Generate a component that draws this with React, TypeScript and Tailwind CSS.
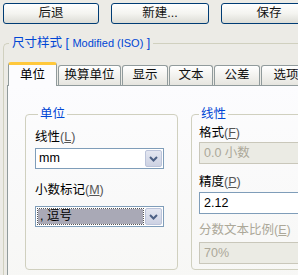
import React from "react";

const FONT = { fontFamily: '"Liberation Sans", "Noto Sans CJK SC", sans-serif' };

const Chevron = () => (
  <svg width="9" height="6" viewBox="0 0 9 6">
    <path d="M1 1 L4.5 4.5 L8 1" stroke="#4d6185" strokeWidth="2" fill="none" />
  </svg>
);

const Button = ({ label, w }: { label: string; w: string }) => (
  <div
    className={
      w +
      " h-[21px] shrink-0 rounded-[3px] border border-[#003c74] bg-gradient-to-b from-white via-[#f4f4f0] to-[#dcdcd6] flex items-center justify-center text-[12.5px] text-[#111]"
    }
  >
    {label}
  </div>
);

const Tab = ({ label, w, active }: { label: string; w: string; active?: boolean }) =>
  active ? (
    <div
      className={
        w +
        " h-[24px] -mb-[1px] relative z-10 shrink-0 rounded-t-[3px] border-x border-[#919b9c] border-t-[3px] border-t-[#ffc83c] bg-[#fcfcfe] flex items-start justify-center pt-[1px] text-[12.5px] text-black"
      }
    >
      {label}
    </div>
  ) : (
    <div
      className={
        w +
        " h-[20px] shrink-0 rounded-t-[3px] border border-b-0 border-[#919b9c] bg-gradient-to-b from-white to-[#e6e5df] flex items-center justify-center text-[12.5px] text-[#111]"
      }
    >
      {label}
    </div>
  );

const Label = ({ text, key1, disabled }: { text: string; key1: string; disabled?: boolean }) => (
  <div className={"h-[16px] leading-[16px] text-[12.5px] " + (disabled ? "text-[#aca899]" : "text-black")}>
    {text}
    <span className={disabled ? "text-[#aca899]" : "text-[#555]"}>
      (<span className="underline">{key1}</span>)
    </span>
  </div>
);

const Combo = ({ value, selected }: { value: string; selected?: boolean }) => (
  <div className="flex h-[21px] border border-[#7f9db9] bg-white">
    <div className="flex-1 flex items-center p-[2px]">
      {selected ? (
        <div className="flex-1 h-full flex items-center bg-[#a9a9b6] outline outline-1 outline-dotted outline-[#555] pl-[2px] text-[12.5px] text-black">
          {value}
        </div>
      ) : (
        <div className="pl-[1px] text-[12.5px] text-black">{value}</div>
      )}
    </div>
    <div className="w-[17px] m-[1px] ml-0 rounded-[2px] border border-[#bcc4da] bg-gradient-to-b from-[#e4e7f1] to-[#cdd2e3] flex items-center justify-center">
      <Chevron />
    </div>
  </div>
);

const Field = ({ value, disabled }: { value: string; disabled?: boolean }) => (
  <div
    className={
      "h-[22px] w-[140px] border flex items-center pl-[4px] text-[12.5px] " +
      (disabled ? "border-[#c9c7ba] bg-[#ebebe4] text-[#aca899]" : "border-[#7f9db9] bg-white text-black")
    }
  >
    {value}
  </div>
);

export default function App() {
  return (
    <div className="w-[298px] h-[275px] overflow-hidden bg-[#ecebe6]" style={FONT}>
      <div className="flex gap-[12px] pt-[3px] pl-[3px]">
        <Button label="后退" w="w-[96px]" />
        <Button label="新建..." w="w-[98px]" />
        <Button label="保存" w="w-[96px]" />
      </div>

      <fieldset className="ml-[3px] mt-[11px] w-[330px] border-l border-t border-[#d0d0bf] rounded-tl-[5px] pl-[3px]">
        <legend className="ml-[2px] px-[3px] leading-[16px] text-[12.5px] text-[#0046d5]">
          尺寸样式 [ <span className="text-[11px]">Modified (ISO)</span> ]
        </legend>

        <div className="flex items-end gap-[1px] pl-[1px] mt-[11px]">
          <Tab label="单位" w="w-[49px]" active />
          <Tab label="换算单位" w="w-[63px]" />
          <Tab label="显示" w="w-[46px]" />
          <Tab label="文本" w="w-[44px]" />
          <Tab label="公差" w="w-[46px]" />
          <Tab label="选项" w="w-[50px]" />
        </div>

        <div className="h-[200px] border border-[#919b9c] bg-gradient-to-b from-[#fcfcfe] to-[#f7f7f5] flex items-start gap-[13px] pl-[17px] pt-[20px]">
          <fieldset className="w-[153px] h-[164px] shrink-0 border border-[#d0d0bf] rounded-[4px] pl-[9px] pr-[13px]">
            <legend className="ml-[3px] px-[2px] leading-[16px] text-[12.5px] text-[#0046d5]">单位</legend>
            <div className="mt-[7px]">
              <Label text="线性" key1="L" />
            </div>
            <div className="mt-[3px]">
              <Combo value="mm" />
            </div>
            <div className="mt-[13px]">
              <Label text="小数标记" key1="M" />
            </div>
            <div className="mt-[8px]">
              <Combo value=", 逗号" selected />
            </div>
          </fieldset>

          <fieldset className="w-[160px] h-[164px] shrink-0 border border-[#d0d0bf] rounded-[4px] pl-[7px]">
            <legend className="ml-0 px-[2px] leading-[16px] text-[12.5px] text-[#0046d5]">线性</legend>
            <div className="mt-[3px]">
              <Label text="格式" key1="F" />
            </div>
            <div className="mt-[1px]">
              <Field value="0.0 小数" disabled />
            </div>
            <div className="mt-[10px]">
              <Label text="精度" key1="P" />
            </div>
            <div className="mt-[2px]">
              <Field value="2.12" />
            </div>
            <div className="mt-[8px]">
              <Label text="分数文本比例" key1="E" disabled />
            </div>
            <div className="mt-[4px]">
              <Field value="70%" disabled />
            </div>
          </fieldset>
        </div>
      </fieldset>
    </div>
  );
}
